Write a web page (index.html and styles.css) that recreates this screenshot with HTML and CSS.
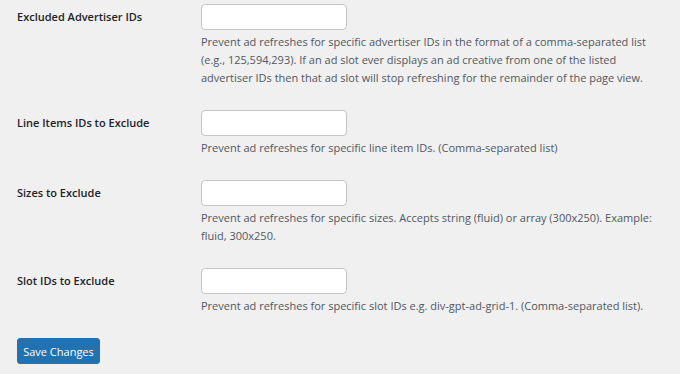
FILE: index.html
```html
<!DOCTYPE html>
<html lang="en">
<head>
  <meta charset="UTF-8" />
  <title>Refresh Settings</title>
  <link rel="stylesheet" href="styles.css">
</head>
<body>
  <form class="settings-form">
    <div class="form-row">
      <label class="row-label" for="advertiserIds">Excluded Advertiser IDs</label>
      <div class="row-field">
        <input type="text" id="advertiserIds" class="text-input">
        <p class="description">Prevent ad refreshes for specific advertiser IDs in the format of a comma-separated list (e.g., 125,594,293). If an ad slot ever displays an ad creative from one of the listed advertiser IDs then that ad slot will stop refreshing for the remainder of the page view.</p>
      </div>
    </div>

    <div class="form-row">
      <label class="row-label" for="lineItemIds">Line Items IDs to Exclude</label>
      <div class="row-field">
        <input type="text" id="lineItemIds" class="text-input">
        <p class="description">Prevent ad refreshes for specific line item IDs. (Comma-separated list)</p>
      </div>
    </div>

    <div class="form-row">
      <label class="row-label" for="sizes">Sizes to Exclude</label>
      <div class="row-field">
        <input type="text" id="sizes" class="text-input">
        <p class="description">Prevent ad refreshes for specific sizes. Accepts string (fluid) or array (300x250). Example: fluid, 300x250.</p>
      </div>
    </div>

    <div class="form-row">
      <label class="row-label" for="slotIds">Slot IDs to Exclude</label>
      <div class="row-field">
        <input type="text" id="slotIds" class="text-input">
        <p class="description">Prevent ad refreshes for specific slot IDs e.g. div-gpt-ad-grid-1. (Comma-separated list).</p>
      </div>
    </div>

    <button type="submit" class="save-btn">Save Changes</button>
  </form>
</body>
</html>
```

FILE: styles.css
```css
body {
  margin: 0;
  background: #f0f0f1;
  font-family: 'Open Sans', 'Noto Sans', sans-serif;
  font-size: 11px;
  color: #1d2327;
}

.settings-form {
  padding: 4px 0 0 17px;
}

.form-row {
  display: grid;
  grid-template-columns: 184px 464px;
  margin-bottom: 23px;
}

.row-label {
  font-size: 11px;
  font-weight: 600;
  line-height: 26px;
  color: #1d2327;
}

.text-input {
  display: block;
  box-sizing: border-box;
  width: 146px;
  height: 26px;
  margin: 0;
  padding: 0 8px;
  background: #fff;
  border: 1px solid #c3c4c7;
  border-radius: 4px;
  font: inherit;
}

.description {
  margin: 3px 0 0;
  line-height: 18px;
  color: #50575e;
}

.save-btn {
  display: block;
  margin-top: 8px;
  width: 83px;
  height: 26px;
  padding: 0;
  background: #2271b1;
  border: 1px solid #2271b1;
  border-radius: 3px;
  color: #fff;
  font: inherit;
  font-size: 11px;
}
```
